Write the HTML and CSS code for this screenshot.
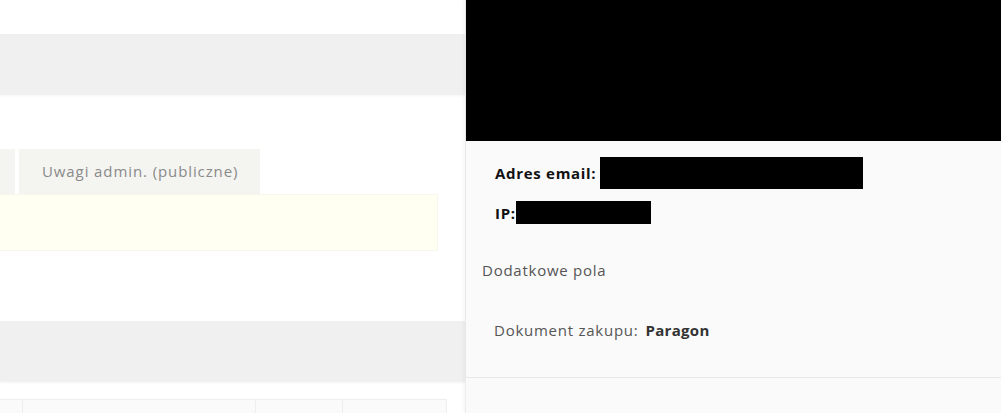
FILE: index.html
```html
<!DOCTYPE html>
<html lang="pl">
<head>
<meta charset="utf-8">
<title>Zamówienie</title>
<link rel="stylesheet" href="styles.css">
</head>
<body>
<div class="page">
  <main class="main">
    <div class="bar bar-top"></div>
    <div class="tabs">
      <div class="tab tab-cut"></div>
      <div class="tab">Uwagi admin. (publiczne)</div>
    </div>
    <div class="note"></div>
    <div class="bar bar-mid"></div>
    <div class="table">
      <div class="cell c1"></div>
      <div class="cell c2"></div>
      <div class="cell c3"></div>
      <div class="cell c4"></div>
    </div>
  </main>
  <aside class="side">
    <div class="panel">
      <div class="redact-head"></div>
      <div class="panel-body">
        <div class="line"><b class="lbl-email">Adres email:</b><span class="redact r-email"></span></div>
        <div class="line line-ip"><b class="lbl-ip">IP:</b><span class="redact r-ip"></span></div>
        <div class="section-title">Dodatkowe pola</div>
        <div class="field"><span class="field-label">Dokument zakupu:</span><b>Paragon</b></div>
      </div>
    </div>
    <div class="side-below"></div>
  </aside>
</div>
</body>
</html>
```
FILE: styles.css
```css
html, body {
  margin: 0;
  padding: 0;
  background: #ffffff;
  font-family: "Open Sans", "DejaVu Sans", sans-serif;
  overflow: hidden;
}
.page {
  display: flex;
  width: 1001px;
  height: 413px;
}
.main {
  width: 465px;
  flex: none;
  padding-top: 34px;
  box-sizing: border-box;
}
.bar {
  background: #f0f0f0;
  box-shadow: 0 1px 2px rgba(0,0,0,0.04);
}
.bar-top {
  height: 61px;
}
.tabs {
  display: flex;
  gap: 4px;
  margin-top: 54px;
  height: 45px;
}
.tab {
  background: #f4f4f1;
  width: 241px;
  box-sizing: border-box;
  padding-left: 23px;
  font-size: 15px;
  letter-spacing: 0.9px;
  line-height: 45px;
  color: #8a8a8a;
}
.tab-cut {
  width: 15px;
  padding: 0;
}
.note {
  width: 438px;
  height: 57px;
  box-sizing: border-box;
  background: #fffff2;
  border: 1px solid #f6f6ea;
  border-left: none;
}
.bar-mid {
  margin-top: 70px;
  height: 61px;
}
.table {
  display: flex;
  margin-top: 17px;
  width: 447px;
  height: 20px;
}
.cell {
  background: #fafafa;
  border: 1px solid #eeeeee;
  border-right: none;
  box-sizing: border-box;
}
.c1 { width: 22px; border-left: none; }
.c2 { width: 233px; }
.c3 { width: 87px; }
.c4 { width: 105px; border-right: 1px solid #eeeeee; }
.side {
  flex: 1;
  display: flex;
  flex-direction: column;
  border-left: 1px solid #ececec;
  box-shadow: -2px 0 3px rgba(0,0,0,0.03);
}
.panel {
  height: 377px;
  background: #fafafa;
  border-bottom: 1px solid #e8e8e8;
  box-shadow: 0 1px 2px rgba(0,0,0,0.05);
}
.redact-head {
  height: 141px;
  background: #000000;
}
.panel-body {
  padding: 16px 0 0 16px;
  color: #555555;
  font-size: 15px;
  letter-spacing: 0.75px;
}
.line {
  display: flex;
  align-items: center;
  height: 32px;
  padding-left: 13px;
  color: #111111;
  font-size: 15px;
  letter-spacing: 0.7px;
}
.line b {
  font-weight: 700;
}
.lbl-email {
  margin-right: 4px;
}
.lbl-ip {
  margin-right: 0;
}
.line-ip {
  margin-top: 12px;
  height: 23px;
}
.redact {
  display: block;
  background: #000000;
}
.r-email {
  width: 263px;
  height: 32px;
}
.r-ip {
  width: 135px;
  height: 23px;
}
.section-title {
  margin-top: 36px;
  line-height: 20px;
}
.field {
  margin-top: 40px;
  padding-left: 12px;
  line-height: 20px;
}
.field-label {
  margin-right: 7px;
}
.field b {
  color: #333333;
  font-weight: 700;
  letter-spacing: 0.3px;
}
.side-below {
  flex: 1;
  background: #fafafa;
}
```
